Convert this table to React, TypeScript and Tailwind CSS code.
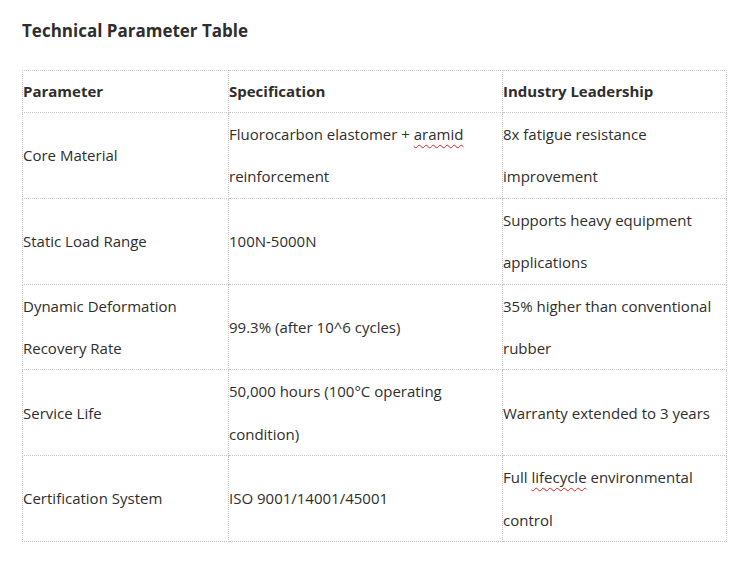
const rows: { param: string[]; spec: string[]; lead: React.ReactNode[] }[] = [
  {
    param: ["Core Material"],
    spec: ["Fluorocarbon elastomer + ", "reinforcement"],
    lead: ["8x fatigue resistance", "improvement"],
  },
  {
    param: ["Static Load Range"],
    spec: ["100N-5000N"],
    lead: ["Supports heavy equipment", "applications"],
  },
  {
    param: ["Dynamic Deformation", "Recovery Rate"],
    spec: ["99.3% (after 10^6 cycles)"],
    lead: ["35% higher than conventional", "rubber"],
  },
  {
    param: ["Service Life"],
    spec: ["50,000 hours (100°C operating", "condition)"],
    lead: ["Warranty extended to 3 years"],
  },
  {
    param: ["Certification System"],
    spec: ["ISO 9001/14001/45001"],
    lead: [],
  },
];

function Squiggle({ children }: { children: React.ReactNode }) {
  return (
    <span className="underline decoration-wavy decoration-[#e02020] decoration-1 underline-offset-[4px]">
      {children}
    </span>
  );
}

function Lines({ lines }: { lines: React.ReactNode[] }) {
  return (
    <>
      {lines.map((l, i) => (
        <div key={i} className="whitespace-nowrap">
          {l}
        </div>
      ))}
    </>
  );
}

export default function App() {
  const cell = "border border-dotted border-[#c8c8c8] p-0 align-middle";
  return (
    <div
      className="min-h-[579px] bg-white pl-[22px] pt-[18px] text-[#2e2e2e]"
      style={{ fontFamily: '"Open Sans", "Noto Sans", sans-serif' }}
    >
      <h2 className="text-[17px] font-bold leading-[26px]">Technical Parameter Table</h2>
      <table className="mt-[26px] w-[704px] table-fixed border-collapse text-[15px] leading-[42.4px]">
        <colgroup>
          <col className="w-[206px]" />
          <col className="w-[274px]" />
          <col className="w-[224px]" />
        </colgroup>
        <thead>
          <tr className="font-bold leading-[41px]">
            <td className={cell}>Parameter</td>
            <td className={cell}>Specification</td>
            <td className={cell}>Industry Leadership</td>
          </tr>
        </thead>
        <tbody>
          {rows.map((r, i) => (
            <tr key={i}>
              <td className={cell}>
                <Lines lines={r.param} />
              </td>
              <td className={cell}>
                {i === 0 ? (
                  <>
                    <div className="whitespace-nowrap">
                      Fluorocarbon elastomer + <Squiggle>aramid</Squiggle>
                    </div>
                    <div className="whitespace-nowrap">reinforcement</div>
                  </>
                ) : (
                  <Lines lines={r.spec} />
                )}
              </td>
              <td className={cell}>
                {i === 4 ? (
                  <>
                    <div className="whitespace-nowrap">
                      Full <Squiggle>lifecycle</Squiggle> environmental
                    </div>
                    <div className="whitespace-nowrap">control</div>
                  </>
                ) : (
                  <Lines lines={r.lead} />
                )}
              </td>
            </tr>
          ))}
        </tbody>
      </table>
    </div>
  );
}
